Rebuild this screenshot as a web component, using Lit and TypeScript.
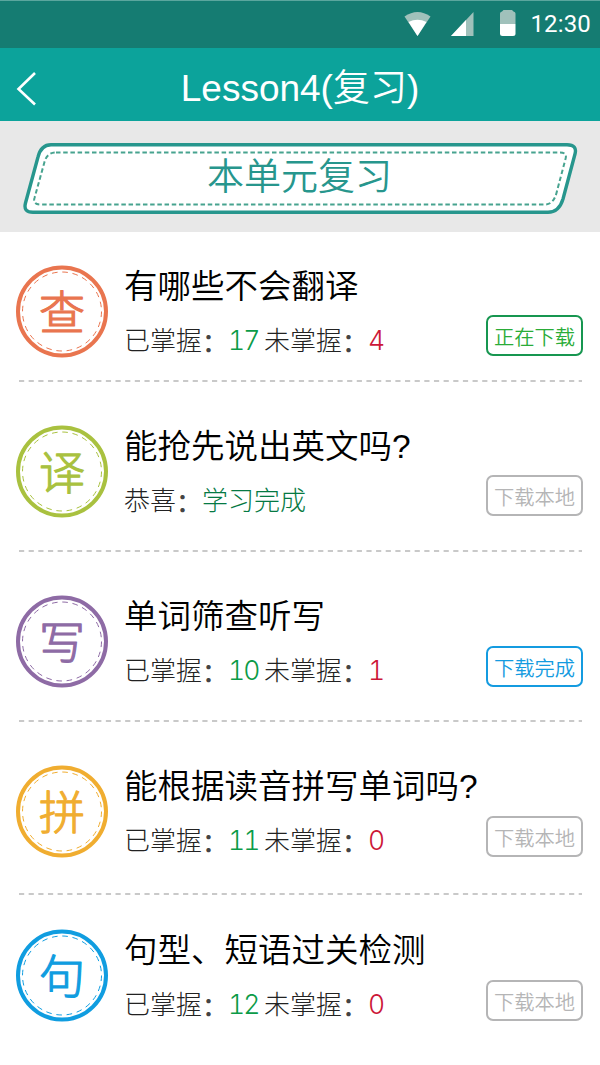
import { LitElement, html, css, svg } from "lit";
import { customElement, property } from "lit/decorators.js";

interface Lesson {
  glyph: string;
  color: string;
  title: string;
  question?: boolean;
  known?: number;
  unknown?: number;
  status: string;
  tone: string;
}

const LESSONS: Lesson[] = [
  { glyph: "查", color: "#e9754f", title: "有哪些不会翻译", known: 17, unknown: 4, status: "正在下载", tone: "loading" },
  { glyph: "译", color: "#a9c13f", title: "能抢先说出英文吗", question: true, status: "下载本地", tone: "idle" },
  { glyph: "写", color: "#8e6ba5", title: "单词筛查听写", known: 10, unknown: 1, status: "下载完成", tone: "done" },
  { glyph: "拼", color: "#f0ad30", title: "能根据读音拼写单词吗", question: true, known: 11, unknown: 0, status: "下载本地", tone: "idle" },
  { glyph: "句", color: "#109de0", title: "句型、短语过关检测", known: 12, unknown: 0, status: "下载本地", tone: "idle" },
];

@customElement("status-bar")
class StatusBar extends LitElement {
  static styles = css`
    :host { display: flex; height: 48px; box-sizing: border-box; background: #157c72; border-top: 1px solid #5ba69e; justify-content: flex-end; padding-right: 9px; }
    .icons { width: 112px; height: 47px; margin-right: 14px; flex: none; }
    .time { font: 24px/46px Roboto, sans-serif; color: #fff; letter-spacing: 0.15px; }
  `;
  render() {
    return html`
      <svg class="icons" viewBox="403 1 112 47">
        <path d="M403.500 16.500Q416.500 7.500 429.500 16.500L416.500 36Z" fill="#a0c1bb" />
        <path d="M407.500 22Q416.500 17.500 425.500 22L416.500 36Z" fill="#fff" />
        <path d="M472.500 12V36H450Z" fill="#a0c1bb" />
        <path d="M465 20V36H450Z" fill="#fff" />
        <path d="M499 24V13.500Q499 12 501 11.500L502.500 10H511L512.500 11.500Q514.500 12 514.500 13.500V24Z" fill="#a0c1bb" />
        <path d="M499 24H514.500V33.500Q514.500 36 512 36H501.500Q499 36 499 33.500Z" fill="#fff" />
      </svg>
      <span class="time">12:30</span>
    `;
  }
}

@customElement("lesson-row")
class LessonRow extends LitElement {
  @property({ attribute: false }) lesson!: Lesson;

  static styles = css`
    :host { display: flex; height: 93px; font-family: "Liberation Sans", "Noto Sans CJK SC", sans-serif; }
    .badge { width: 94px; height: 94px; flex: none; }
    .badge-glyph { font: 300 46px "Noto Sans CJK SC", sans-serif; stroke-linejoin: round; }
    .body { flex: 1; margin-left: 15px; white-space: nowrap; }
    .title { height: 40px; font: 350 33.5px/38px "Noto Sans CJK SC", sans-serif; color: #000; }
    .mark { font-family: "Liberation Sans", sans-serif; }
    .meta { display: flex; margin-top: 15px; height: 38px; font: 300 26px/38px "Noto Sans CJK SC", sans-serif; color: #222; }
    .colon { font-weight: 500; color: #444; display: inline-block; height: 38px; line-height: 41px; vertical-align: top; }
    .count { width: 36px; margin-left: 0; font: 300 26.5px/41px Inter, sans-serif; font-variant-numeric: tabular-nums; letter-spacing: -2px; }
    .known { color: #0b9b48; }
    .unknown { color: #cc1738; }
    .congrats { color: #057943; }
    .button { box-sizing: border-box; width: 97px; height: 41px; margin: var(--button-top, 50px) 17px 0 0; border: 2px solid; border-radius: 7px; font: 350 20.300px/38px "Noto Sans CJK SC", sans-serif; text-align: center; white-space: nowrap; }
    .loading { color: #2aac38; border-color: #179650; }
    .idle { color: #b5b5b6; }
    .done { color: #149be0; }
  `;

  private label(text: string) {
    return html`<span>${text}<span class="colon">：</span></span>`;
  }

  render() {
    const l = this.lesson;
    return html`
      <svg class="badge" viewBox="0 0 94 94">
        <circle cx="47" cy="46.500" r="44" fill="none" stroke=${l.color} stroke-width="4" />
        <circle cx="47" cy="46.500" r="39.500" fill="none" stroke=${l.color} stroke-width="1" stroke-dasharray="5.600 4.740" />
        <text class="badge-glyph" x="47" y="63.500" text-anchor="middle" fill=${l.color} stroke=${l.color} stroke-width="1.200">${l.glyph}</text>
      </svg>
      <div class="body">
        <div class="title">${l.title}${l.question ? html`<span class="mark">?</span>` : ""}</div>
        <div class="meta">
          ${l.known === undefined
            ? html`${this.label("恭喜")}<span class="congrats">学习完成</span>`
            : html`${this.label("已掌握")}<span class="count known">${l.known}</span>
                ${this.label("未掌握")}<span class="count unknown">${l.unknown}</span>`}
        </div>
      </div>
      <div class="button ${l.tone}">${l.status}</div>
    `;
  }
}

@customElement("app-root")
class AppRoot extends LitElement {
  static styles = css`
    :host { display: block; width: 600px; height: 1065px; overflow: hidden; background: #fff; }
    .header { display: grid; grid-template-columns: 60px 1fr 60px; height: 73px; background: #0ca39b; }
    .back { width: 60px; height: 73px; }
    .heading { text-align: center; color: #fff; font: 350 37px/82px "Liberation Sans", "Noto Sans CJK SC", sans-serif; white-space: nowrap; }
    .banner { height: 111px; background: #e8e8e8; }
    .banner-art { display: block; width: 600px; height: 111px; }
    .banner-text { font: 350 37px "Noto Sans CJK SC", sans-serif; }
    .list { display: grid; grid-template-rows: 160px 170px 170px 164px 93px; padding: 33px 0 0 15px; }
    .item { display: flex; flex-direction: column; }
    .item:nth-child(n + 3) { --button-top: 51px; }
    .divider { display: block; width: 565px; height: 2px; margin: 22px 0 0 3px; }
    .item:nth-child(2) .divider, .item:nth-child(3) .divider { margin-top: 32px; }
    .item:nth-child(4) .divider { margin-top: 35px; }
  `;

  render() {
    return html`
      <status-bar></status-bar>
      <div class="header">
        <svg class="back" viewBox="0 48 60 73">
          <path d="M35 73L18.500 89L35 104.500" fill="none" stroke="#fff" stroke-width="2.600" />
        </svg>
        <div class="heading">Lesson4(复习)</div>
      </div>
      <div class="banner">
        <svg class="banner-art" viewBox="0 121 600 111">
          <path d="M51 144.700H567Q577.500 144.700 575 154L563 199Q559 212.300 548 212.300H33Q23 212.300 25.500 203L38 157Q41 144.700 51 144.700Z" fill="#fff" stroke="#27968d" stroke-width="3.400" />
          <path d="M56 152.500H560Q567.500 152.500 565.500 159L557 191Q554 204.500 545 204.500H41Q32.500 204.500 34.500 198L44.500 162Q47 152.500 56 152.500Z" fill="none" stroke="#47a38f" stroke-width="2" stroke-dasharray="4.500 2.700" />
          <text class="banner-text" x="299.500" y="190" text-anchor="middle" fill="#27968d">本单元复习</text>
        </svg>
      </div>
      <div class="list">
        ${LESSONS.map((l, i) => html`
          <div class="item">
            <lesson-row .lesson=${l}></lesson-row>
            ${i < LESSONS.length - 1
              ? html`<svg class="divider" viewBox="0 0 565 2">${svg`<path d="M1 1H564" stroke="#b8b8b8" stroke-width="1.400" stroke-dasharray="5.200 4.450" />`}</svg>`
              : ""}
          </div>`)}
      </div>
    `;
  }
}
